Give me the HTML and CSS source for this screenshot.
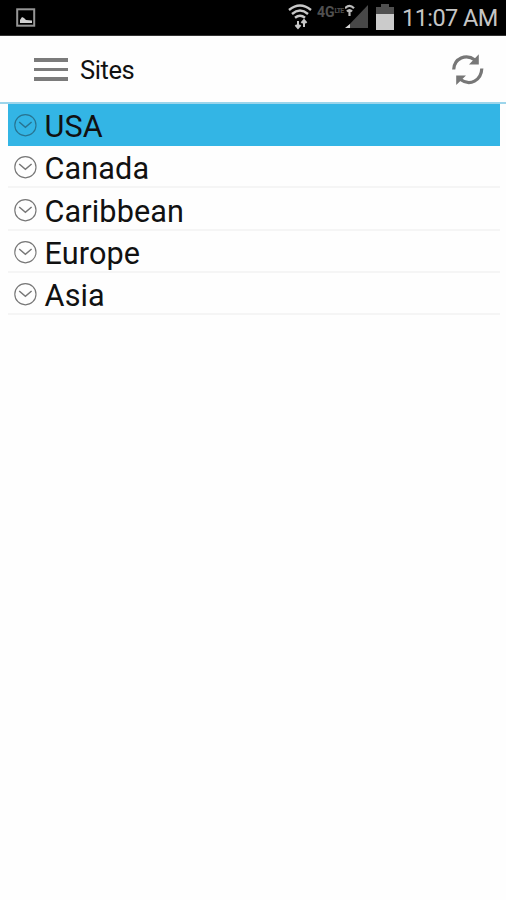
FILE: index.html
```html
<!DOCTYPE html>
<html lang="en">
<head>
<meta charset="utf-8">
<title>Sites</title>
<link rel="stylesheet" href="styles.css">
</head>
<body>
<svg class="defs" width="0" height="0" aria-hidden="true">
  <symbol id="expand" viewBox="0 0 24 24">
    <circle cx="12.4" cy="12.2" r="10.6"/>
    <path d="M6.2 9l6.2 5.2L18.6 9" stroke-width="1.5"/>
  </symbol>
</svg>
<div class="status">
  <svg class="picture" width="20" height="20" viewBox="0 0 20 20">
    <rect x="1.2" y="1.3" width="17" height="16.4" fill="none" stroke="#969696" stroke-width="2"/>
    <path d="M4 15v-3l2-3 2 1 2 2 6 .5V15z" fill="#d2d2d2"/>
  </svg>
  <svg class="wifi" width="24" height="26" viewBox="0 0 24 26" fill="none" stroke="#c8c8c8" stroke-width="2.4">
    <path d="M1 6Q12-3 23 6M4 10Q12 3.2 20 10M7 13.8Q12 9.7 17 13.8"/>
    <path d="M10 17v7M16 23v-7M7.5 21l2.5 3 2.5-3M13.5 19l2.5-3 2.5 3" stroke-width="2"/>
  </svg>
  <div class="network"><span class="gen">4G</span><span class="lte">LTE</span></div>
  <svg class="signal" width="25" height="26" viewBox="0 0 25 26">
    <path d="M23 1v23H1z" fill="#484848"/>
    <path d="M0 24h5v-4z" fill="#d8d8d8"/>
    <path d="M0 4.2Q4.5-.5 9 4.2M2 7.5Q4.5 4.5 7 7.5M4.5 7v5" fill="none" stroke="#bdbdbd" stroke-width="2.2"/>
  </svg>
  <svg class="battery" width="20" height="28" viewBox="0 0 20 28">
    <path d="M6 1h8v3h5v7H1V4h5z" fill="#505050"/>
    <path d="M1 11h18v16H1z" fill="#cbcbcb"/>
  </svg>
  <time class="clock">11:07 AM</time>
</div>
<header class="bar">
  <div class="menu"><i></i><i></i><i></i></div>
  <h1>Sites</h1>
  <svg class="refresh" width="34" height="34" viewBox="0 0 34 34">
    <g fill="none" stroke="#777" stroke-width="3.2">
      <path d="M2.7 16.5C3.2 5.4 15 .3 24 7"/>
      <path d="M30.8 15.5C30.3 27.5 19 33.4 9.5 26.5"/>
    </g>
    <path d="M27.8 1.2v10.2H18zM5.2 32V22.4H15z" fill="#777"/>
  </svg>
</header>
<ul class="sites">
  <li class="selected"><svg><use href="#expand"/></svg><span>USA</span></li>
  <li><svg><use href="#expand"/></svg><span>Canada</span></li>
  <li><svg><use href="#expand"/></svg><span>Caribbean</span></li>
  <li><svg><use href="#expand"/></svg><span>Europe</span></li>
  <li><svg><use href="#expand"/></svg><span>Asia</span></li>
</ul>
</body>
</html>
```

FILE: styles.css
```css
* { box-sizing: border-box; }
body { margin: 0; background: #fefefe; color: #111; font-family: Roboto, sans-serif; }
.defs { display: block; }
.status {
  display: flex;
  align-items: flex-start;
  height: 36px;
  background: #000;
  border-bottom: 1px solid #333;
  color: #c5c5c5;
}
.status svg { flex: none; }
.picture { margin: 8px 0 0 16px; }
.wifi { margin: 4px 0 0 252px; }
.network { display: flex; flex: none; width: 28px; margin: 5px 0 0 5px; color: #505050; line-height: 14px; font-weight: 700; white-space: nowrap; }
.gen { font-size: 14px; }
.lte { font-size: 7px; line-height: 12px; letter-spacing: -0.8px; }
.signal { margin: 4px 0 0 0; }
.battery { margin: 3px 0 0 5px; }
.clock { margin: 4px 0 0 7px; font-size: 23.5px; line-height: 28px; letter-spacing: -0.55px; white-space: nowrap; }
.bar {
  display: flex;
  align-items: center;
  height: 68px;
  padding: 1px 21px 0 34px;
  border-bottom: 2px solid #9cd5eb;
}
.menu { display: flex; flex-direction: column; gap: 6px; width: 34px; }
.menu i { height: 3.5px; background: #7b7b7b; }
h1 { margin: 0 0 0 12px; font-size: 25.5px; line-height: 32px; font-weight: 400; letter-spacing: -0.4px; }
.refresh { margin-left: auto; }
.sites { margin: 0 6px 0 8px; padding: 0; list-style: none; }
.sites li {
  display: flex;
  align-items: center;
  height: 42.2px;
  padding: 2px 0 0 5px;
  font-size: 30.6px;
  line-height: 38px;
}
.sites li + li { height: 42.25px; border-bottom: 2px solid #f5f5f5; }
.sites svg { width: 24px; height: 24px; margin: 0 7.6px 0 0; fill: none; stroke: #777; stroke-width: 1.15; }
.sites span { padding-top: 4px; letter-spacing: 0.1px; }
.sites .selected { padding-bottom: 2px; background: #33b5e5; }
.sites .selected svg { stroke: #287491; }
```
